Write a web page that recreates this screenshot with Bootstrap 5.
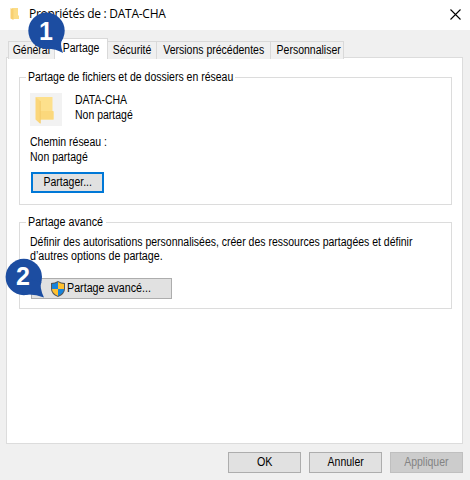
<!DOCTYPE html>
<html lang="fr">
<head>
<meta charset="utf-8">
<title>Propriétés de : DATA-CHA</title>
<link href="https://cdn.jsdelivr.net/npm/bootstrap@5.3.0/dist/css/bootstrap.min.css" rel="stylesheet">
<script src="https://cdn.jsdelivr.net/npm/bootstrap@5.3.0/dist/js/bootstrap.bundle.min.js"></script>
<style>
body{width:470px;height:480px;overflow:hidden;background:#f0f0f0;color:#000;font:12px/15px "Liberation Sans",Arial,sans-serif}
.titlebar{height:30px;padding:0 9px 2px 9px}
.caption-text{font:12px/16px "Open Sans","Noto Sans",sans-serif;letter-spacing:-.27px;margin-left:8px;white-space:nowrap}
.t{display:inline-block;white-space:nowrap;transform:scaleX(.874);transform-origin:0 50%}
.c .t{transform-origin:50% 50%}
.wide{transform:scaleX(.892)}
.tabs{height:28px;padding-left:8px;margin-bottom:-1px;border:0}
.tabs .nav-link{height:18px;padding:0;border:1px solid #d9d9d9;border-left:0;border-bottom:0;border-radius:0;color:#000;background:#f0f0f0;line-height:17px;display:flex;justify-content:center}
.tabs .nav-link.active{height:21px;background:#fff;color:#000;border-color:#d9d9d9;line-height:19px}
.tabs .w1{width:47px;border-left:1px solid #d9d9d9}.w2{width:53px}.w3{width:49px}.w4{width:114px}
.tabs .w5{width:73px;padding-left:3px}
.page{margin:0 7px 0 6px;height:387px;border:1px solid #dcdcdc;background:#fff;padding:19px 10px 0 12px}
.group{border:1px solid #dcdcdc;height:128px;padding:0 10px}
.group+.group{margin-top:17px;height:87px}
.group legend{float:none;width:209px;font-size:12px;line-height:15px;margin:-8px 0 0 -4px;padding-left:2px;background:#fff;height:15px}
.group .short{width:80px}
.btnw{height:21px;width:73px;padding:0;border:1px solid #adadad;border-radius:0;background:#e1e1e1;font-size:12px;line-height:15px;color:#000;display:flex;align-items:center;justify-content:center}
.group .btnw{margin-left:1px}
.btnw.focusd{border:2px solid #0078d7}
.btnw.adv{width:141px;margin-top:15px;justify-content:flex-start;padding-left:19px;gap:2px}
.btnw:disabled{background:#ccc;border-color:#bfbfbf;color:#838383;opacity:1}
.thumb{width:32px;height:33px;background:#f2f2f2}
.names{margin-left:13px}
.path{margin-top:9px;margin-bottom:7px}
.desc{margin-top:5px;line-height:14px}
.actions{padding:8px 7px 0 0}
.pin{position:absolute;z-index:3}
.pin text{font:700 25px "Liberation Sans",Arial,sans-serif;fill:#fff}
.pin1{left:28px;top:12px}
.pin2{left:5px;top:258px}
</style>
</head>
<body>
<header class="titlebar bg-white d-flex align-items-center">
 <svg width="12" height="14" viewBox="0 0 12 14"><path d="M3 1h6v7l1 1v3H3z" fill="#fbdc86"/><path d="M1.500 1l3 1.500V13l-3-1.500z" fill="#f8cf70"/></svg>
 <span class="caption-text">Propriétés de : DATA-CHA</span>
 <svg class="ms-auto" width="11" height="11" viewBox="0 0 11 11"><path d="M.5.5l10 10M10.500.5l-10 10" stroke="#000" stroke-width="1.1"/></svg>
</header>
<nav class="nav nav-tabs tabs align-items-end flex-nowrap">
 <a class="nav-link w1 c"><span class="t">Général</span></a>
 <a class="nav-link active w2 c"><span class="t">Partage</span></a>
 <a class="nav-link w3 c"><span class="t">Sécurité</span></a>
 <a class="nav-link w4 c"><span class="t">Versions précédentes</span></a>
 <a class="nav-link w5 c"><span class="t">Personnaliser</span></a>
</nav>
<main class="page">
 <section class="group">
  <legend><span class="t">Partage de fichiers et de dossiers en réseau</span></legend>
  <div class="d-flex mt-2">
   <div class="thumb"><svg class="d-block" width="32" height="33" viewBox="0 0 32 33"><path d="M6 4h16.500v14l1 1v7.500H10z" fill="#fde08c"/><path d="M10 18h13.500v8.500H10z" fill="#fbd87c"/><path d="M5.500 4l5 4v23l-5-4.500z" fill="#fbd67a"/><path d="M10.200 8v22" stroke="#f0c766" stroke-width=".7"/></svg></div>
   <div class="names"><span class="t d-block">DATA-CHA</span><span class="t d-block">Non partagé</span></div>
  </div>
  <div class="path"><span class="t d-block">Chemin réseau :</span><span class="t d-block">Non partagé</span></div>
  <button class="btn btnw focusd c"><span class="t">Partager...</span></button>
 </section>
 <section class="group">
  <legend class="short"><span class="t wide">Partage avancé</span></legend>
  <div class="desc"><span class="t d-block">Définir des autorisations personnalisées, créer des ressources partagées et définir</span><span class="t wide d-block">d’autres options de partage.</span></div>
  <button class="btn btnw adv"><svg width="14" height="16" viewBox="0 0 14 16"><path d="M7 0Q10 2 14 2v6q0 5-7 8Q0 13 0 8V2q4 0 7-2z" fill="#555"/><path d="M7 1v7H1V3q3 0 6-2z" fill="#1683dc"/><path d="M7 1q3 2 6 2v5H7z" fill="#ffc02e"/><path d="M1 8h6v7q-6-3-6-7z" fill="#ffc02e"/><path d="M7 8h6q0 4-6 7z" fill="#1683dc"/></svg><span class="t wide">Partage avancé...</span></button>
 </section>
</main>
<footer class="actions d-flex gap-2 justify-content-end"><button class="btn btnw c"><span class="t wide">OK</span></button><button class="btn btnw c"><span class="t">Annuler</span></button><button class="btn btnw c" disabled><span class="t">Appliquer</span></button></footer>
<svg class="pin pin1" width="38" height="42" viewBox="0 0 38 42"><circle cx="18.500" cy="18.800" r="18.200" fill="#1c4da1"/><path d="M35 26Q31 31 35 41Q27 36 16 36.800L18 20z" fill="#1c4da1"/><text x="18" y="27.500" text-anchor="middle">1</text></svg>
<svg class="pin pin2" width="42" height="42" viewBox="0 0 42 42"><circle cx="18.800" cy="19" r="18.200" fill="#1c4da1"/><path d="M36.500 24Q34 29 39 39.500Q28 35 17 37L18 20z" fill="#1c4da1"/><text x="18" y="27" text-anchor="middle">2</text></svg>
</body>
</html>
